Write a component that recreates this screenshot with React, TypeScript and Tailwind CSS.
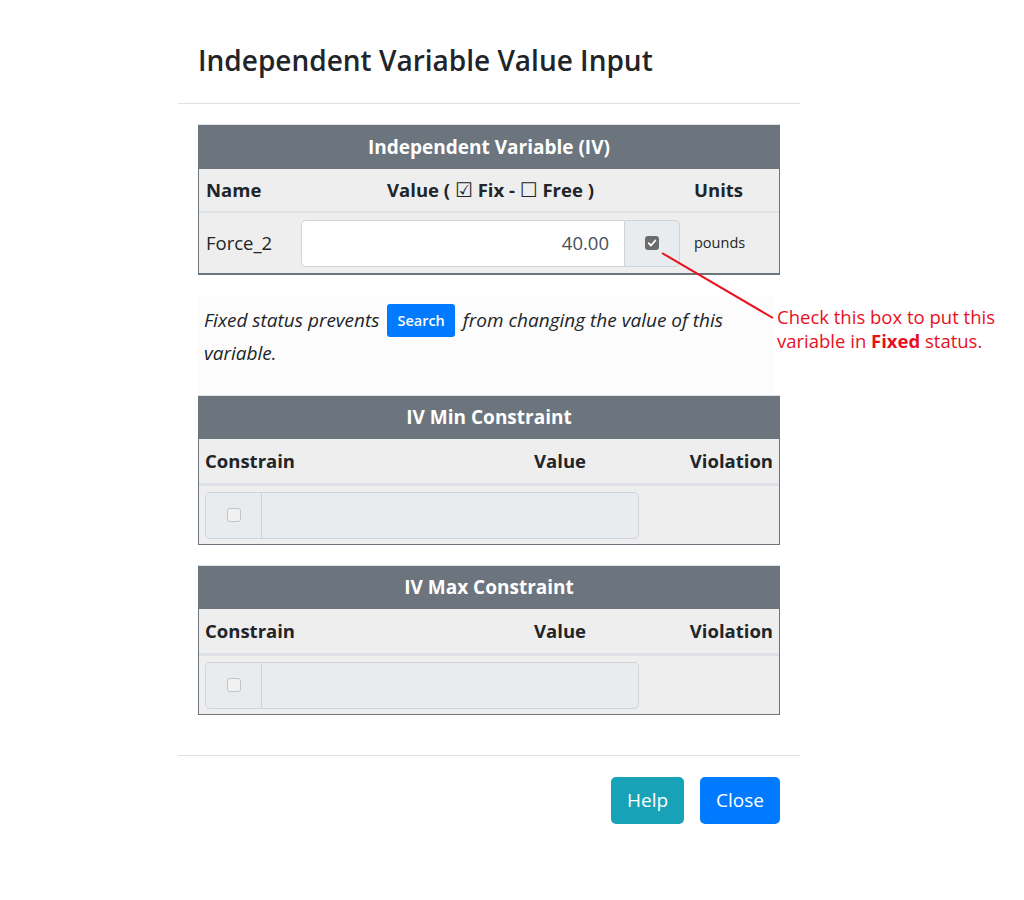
import React from 'react'

const font = { fontFamily: '"Open Sans", "Noto Sans", sans-serif' }

function CheckedBox() {
  return (
    <span className="inline-flex h-[14px] w-[14px] items-center justify-center rounded-[3px] bg-[#6b6b6b]">
      <svg viewBox="0 0 12 12" className="h-[10px] w-[10px]">
        <path d="M2 6.2 L4.8 9 L10 3" fill="none" stroke="#fff" strokeWidth="2.2" strokeLinecap="round" strokeLinejoin="round" />
      </svg>
    </span>
  )
}

function EmptyBox() {
  return <span className="inline-block h-[14px] w-[14px] rounded-[3px] border border-[#c4c4c4] bg-[#f1f1f1]" />
}

function ConstraintTable({ title }: { title: string }) {
  return (
    <div className="w-[582px] border-t border-[#dee2e6]">
      <div className="flex h-[43px] items-center justify-center bg-[#6c757d] text-[19px] font-bold text-white">
        {title}
      </div>
      <div className="border-x border-b border-[#6c757d] bg-[#eeeeee]">
        <div className="flex h-[47px] items-center border-b-[3px] border-[#dee2e6] px-[6px] text-[18.5px] font-bold text-[#212529]">
          <div className="flex-1">Constrain</div>
          <div>Value</div>
          <div className="w-[187px] text-right">Violation</div>
        </div>
        <div className="flex h-[58px] items-center px-[6px]">
          <div className="flex h-[47px] w-[434px] rounded-[5px] border border-[#ced4da]">
            <div className="flex w-[56px] items-center justify-center rounded-l-[5px] border-r border-[#ced4da] bg-[#e9ecef]">
              <EmptyBox />
            </div>
            <div className="flex-1 rounded-r-[5px] bg-[#e9ecef]" />
          </div>
        </div>
      </div>
    </div>
  )
}

export default function App() {
  return (
    <div className="relative min-h-[900px] bg-white text-[#212529]" style={font}>
      <div className="ml-[178px] w-[622px] pt-[18px]">
        {/* header */}
        <div className="flex h-[86px] items-center border-b border-[#dee2e6] px-5">
          <h4 className="text-[28px] font-semibold leading-tight text-[#212529]">Independent Variable Value Input</h4>
        </div>

        {/* body */}
        <div className="px-5 pt-5 pb-[20px]">
          {/* IV table */}
          <div className="w-[582px] border-t border-[#dee2e6]">
            <div className="flex h-[44px] items-center justify-center bg-[#6c757d] text-[19px] font-bold text-white">
              Independent Variable (IV)
            </div>
            <div className="border-x border-b-2 border-[#6c757d] bg-[#eeeeee]">
              <div className="grid h-[44px] grid-cols-[95px_393px_1fr] items-center border-b-2 border-[#dee2e6] text-[18.5px] font-bold">
                <div className="px-[7px]">Name</div>
                <div className="px-[7px] text-center">
                  Value ({' '}
                  <span style={{ fontFamily: '"DejaVu Sans", sans-serif' }} className="text-[20px] font-normal">☑</span> Fix -{' '}
                  <span style={{ fontFamily: '"DejaVu Sans", sans-serif' }} className="text-[20px] font-normal">☐</span> Free )
                </div>
                <div className="px-[7px]">Units</div>
              </div>
              <div className="grid h-[60px] grid-cols-[95px_393px_1fr] items-center">
                <div className="px-[7px] text-[18.5px]">Force_2</div>
                <div className="px-[7px]">
                  <div className="flex h-[47px]">
                    <div className="flex flex-1 items-center justify-end rounded-l-[5px] border border-[#ced4da] bg-white pr-[15px] text-[18.5px] text-[#495057]">
                      40.00
                    </div>
                    <div className="flex w-[55px] items-center justify-center rounded-r-[5px] border border-l-0 border-[#ced4da] bg-[#e9ecef]">
                      <CheckedBox />
                    </div>
                  </div>
                </div>
                <div className="px-[7px] text-[14.5px]">pounds</div>
              </div>
            </div>
          </div>

          {/* note */}
          <div className="mt-[21px] mb-px w-[575px] bg-[#fcfcfc] px-[6px] pt-2 pb-[24px] text-[19px] italic leading-[33px] text-[#212529]">
            Fixed status prevents{' '}
            <span className="mx-[3px] inline-block h-[33px] rounded-[3px] bg-[#007bff] px-[10px] align-top text-[14.5px] font-semibold not-italic leading-[33px] text-white">
              Search
            </span>{' '}
            from changing the value of this variable.
          </div>

          <ConstraintTable title="IV Min Constraint" />
          <div className="h-[20px]" />
          <ConstraintTable title="IV Max Constraint" />
          <div className="h-[20px]" />
        </div>

        {/* footer */}
        <div className="flex justify-end gap-4 border-t border-[#dee2e6] px-5 pt-[21px] pb-5">
          <button className="h-[47px] rounded-[5px] bg-[#17a2b8] px-[16px] text-[19px] text-white">Help</button>
          <button className="h-[47px] rounded-[5px] bg-[#007bff] px-[16px] text-[19px] text-white">Close</button>
        </div>
      </div>

      {/* annotation */}
      <svg className="pointer-events-none absolute left-0 top-0" width="1024" height="900">
        <line x1="662" y1="253" x2="773" y2="318" stroke="#e8101e" strokeWidth="2" />
      </svg>
      <div className="absolute left-[777px] top-[305px] text-[18.5px] leading-[24px] text-[#e8101e]">
        Check this box to put this
        <br />
        variable in <span className="font-bold">Fixed</span> status.
      </div>
    </div>
  )
}
